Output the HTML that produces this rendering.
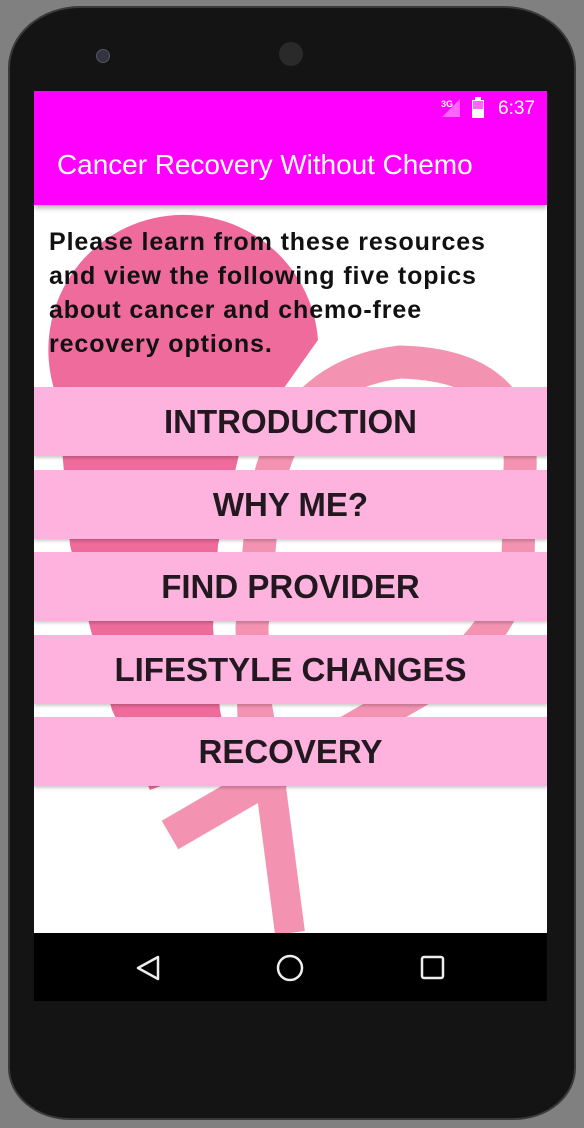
<!DOCTYPE html>
<html><head><meta charset="utf-8"><style>
body{margin:0;width:584px;height:1128px;background:#808080;overflow:hidden;position:relative;font-family:"Liberation Sans",sans-serif}
.phone{position:absolute;left:10px;top:8px;width:564px;height:1110px;background:#141414;border-radius:70px 70px 60px 60px/60px 60px 50px 50px;box-shadow:0 0 0 2px #3a3a3a}
.screen{position:absolute;left:34px;top:91px;width:513px;height:910px;background:#fff;overflow:hidden}
.status{position:absolute;left:0;top:0;width:513px;height:114px;background:#ff00ff;box-shadow:0 3px 5px rgba(0,0,0,.3);z-index:3}
.title{position:absolute;left:23px;top:58px;color:#fff;font-size:28px;letter-spacing:-0.05px}
.time{position:absolute;right:12px;top:7px;color:#fff;font-size:19px}
.intro{position:absolute;left:15px;top:134px;width:495px;font-weight:bold;font-size:25px;line-height:34px;color:#111;z-index:2;letter-spacing:0.9px;white-space:nowrap}
.btn{position:absolute;left:0;width:513px;height:69px;background:#feb2de;color:#221820;font-weight:bold;font-size:33px;text-align:center;line-height:70px;box-shadow:0 2px 3px rgba(0,0,0,.2);z-index:2}
.nav{position:absolute;left:0;top:842px;width:513px;height:68px;background:#000;z-index:3}
</style></head><body>
<div class="phone"></div>
<div style="position:absolute;left:96px;top:49px;width:12px;height:12px;border-radius:50%;background:#334;border:1px solid #555"></div>
<div style="position:absolute;left:279px;top:42px;width:24px;height:24px;border-radius:50%;background:#2a2a2a"></div>
<div class="screen">
<svg width="513" height="910" style="position:absolute;left:0;top:0" viewBox="34 91 513 910">
<path d="M58 400 A135 135 0 1 1 318 340 L240 450 L218 545 L213 627 L220 710 L230 760 L150 790 L112 710 L90 627 L70 545 Z" fill="#ee6b9b"/>
<path d="M254 720 L252 627 L260 540 Q270 378 400 362 Q525 365 520 470 L518 560 Q505 640 420 690 L170 835" fill="none" stroke="#f393b1" stroke-width="33"/>
<path d="M256 700 L270 780 L290 933" fill="none" stroke="#f393b1" stroke-width="30"/>
</svg>
<div class="status"><div class="time">6:37</div>
<div style="position:absolute;left:407px;top:8px;color:#fff;font-size:9px;font-weight:bold">3G</div>
<svg style="position:absolute;left:406px;top:6px" width="22" height="22"><polygon points="20,2 20,20 2,20" fill="#ff66ff"/></svg>
<svg style="position:absolute;left:437px;top:6px" width="14" height="22"><rect x="1" y="3" width="12" height="18" fill="#fff"/><rect x="4" y="0" width="6" height="3" fill="#fff"/><rect x="2" y="4" width="10" height="8" fill="#ff66ff"/></svg>
<div class="title">Cancer Recovery Without Chemo</div></div>
<div class="intro">Please learn from these resources<br>and view the following five topics<br>about cancer and chemo-free<br>recovery options.</div>
<div class="btn" style="top:296px">INTRODUCTION</div>
<div class="btn" style="top:379px">WHY ME?</div>
<div class="btn" style="top:461px">FIND PROVIDER</div>
<div class="btn" style="top:544px">LIFESTYLE CHANGES</div>
<div class="btn" style="top:626px">RECOVERY</div>
<div class="nav"><svg width="513" height="68">
<polygon points="104,35 124,24 124,46" fill="none" stroke="#eee" stroke-width="2.5" stroke-linejoin="round"/>
<circle cx="256" cy="35" r="12" fill="none" stroke="#eee" stroke-width="2.5"/>
<rect x="388" y="24" width="21" height="21" rx="2" fill="none" stroke="#eee" stroke-width="2.5"/>
</svg></div>
</div>
</body></html>
